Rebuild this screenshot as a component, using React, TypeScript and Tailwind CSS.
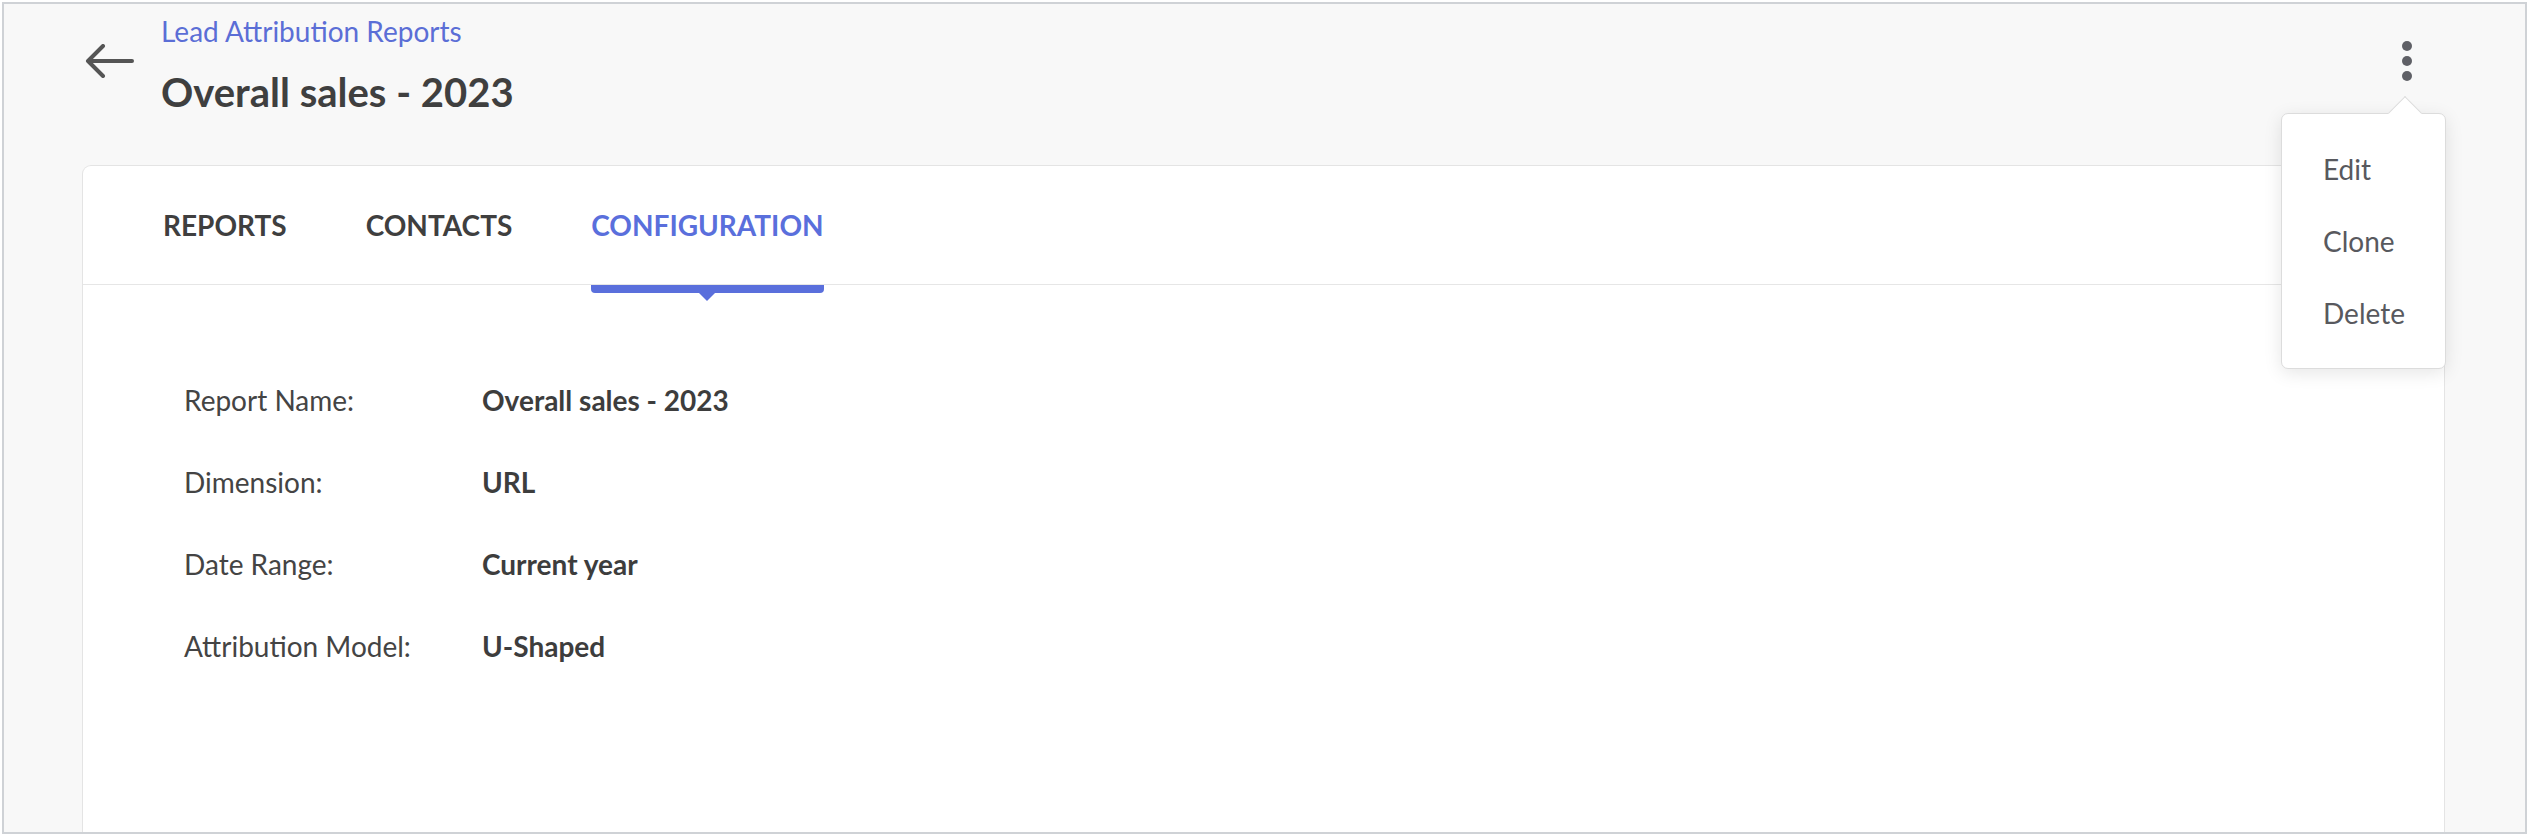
import React from 'react';

const rows = [
  { label: 'Report Name:', value: 'Overall sales - 2023' },
  { label: 'Dimension:', value: 'URL' },
  { label: 'Date Range:', value: 'Current year' },
  { label: 'Attribution Model:', value: 'U-Shaped' },
];

const tabs = ['REPORTS', 'CONTACTS', 'CONFIGURATION'];

const App: React.FC = () => {
  const activeTab = 'CONFIGURATION';

  return (
    <div className="w-[2529px] h-[836px] p-[2px] bg-white" style={{ fontFamily: 'Lato, "Open Sans", sans-serif' }}>
      <div className="h-full border-2 border-[#cfd2d6] bg-[#f8f8f8] overflow-hidden flex flex-col pl-[78px] pr-[80px]">
        {/* Header */}
        <div className="flex items-start justify-between h-[161px] shrink-0">
          <div className="flex items-start">
            <button className="mt-[39px] ml-[2px] w-[52px] h-[36px] flex items-center justify-center text-[#555]">
              <svg width="50" height="34" viewBox="0 0 50 34" fill="none" stroke="currentColor" strokeWidth="4" strokeLinecap="round" strokeLinejoin="round">
                <path d="M47 17H4" />
                <path d="M18 2L3 17l15 15" />
              </svg>
            </button>
            <div className="ml-[25px] pt-[11px] flex flex-col">
              <a className="text-[28px] leading-[32px] text-[#5b6ed6]">Lead Attribution Reports</a>
              <h1 className="mt-[21px] text-[40px] leading-[48px] font-bold text-[#3f3f3f]">Overall sales - 2023</h1>
            </div>
          </div>

          <div className="relative mt-[30px] mr-[18px]">
            <button className="w-[40px] h-[54px] flex flex-col items-center justify-center gap-[5px]">
              <span className="w-[10px] h-[10px] rounded-full bg-[#5f6066]" />
              <span className="w-[10px] h-[10px] rounded-full bg-[#5f6066]" />
              <span className="w-[10px] h-[10px] rounded-full bg-[#5f6066]" />
            </button>
            <div className="absolute z-10 right-[-19px] top-[79px] w-[165px] h-[256px] bg-white border border-[#dcdcdc] rounded-[7px] shadow-[0_4px_18px_rgba(0,0,0,0.10)]">
              <div className="absolute left-[111px] top-[-13px] w-[24px] h-[24px] bg-white border-l border-t border-[#dcdcdc] rotate-45" />
              <ul className="relative pt-[39px] pl-[41px] flex flex-col gap-[40px] text-[28px] leading-[32px] text-[#58595e]">
                <li>Edit</li>
                <li>Clone</li>
                <li>Delete</li>
              </ul>
            </div>
          </div>
        </div>

        {/* Card */}
        <div className="flex-1 bg-white border border-[#e4e4e4] border-b-0 rounded-t-[9px]">
          <div className="flex h-[119px] items-center gap-[79px] pl-[80px] border-b border-[#e6e6e6]">
            {tabs.map((t) => (
              <div key={t} className="relative h-full flex items-center">
                <span className={`text-[28px] leading-[32px] font-bold ${t === activeTab ? 'text-[#5a6fdc]' : 'text-[#3f3f3f]'}`}>
                  {t}
                </span>
                {t === activeTab && (
                  <>
                    <div className="absolute left-0 right-0 -bottom-[9px] h-[8px] bg-[#5a6fdc] rounded-b-[4px]" />
                    <div className="absolute left-1/2 -translate-x-1/2 -bottom-[17px] w-0 h-0 border-l-[9px] border-r-[9px] border-t-[9px] border-l-transparent border-r-transparent border-t-[#5a6fdc]" />
                  </>
                )}
              </div>
            ))}
          </div>

          <div className="pt-[99px] pl-[101px] flex flex-col gap-[50px]">
            {rows.map((r) => (
              <div key={r.label} className="flex text-[28px] leading-[32px]">
                <div className="w-[298px] text-[#444]">{r.label}</div>
                <div className="font-bold text-[#3d3d3d]">{r.value}</div>
              </div>
            ))}
          </div>
        </div>
      </div>
    </div>
  );
};

export default App;
